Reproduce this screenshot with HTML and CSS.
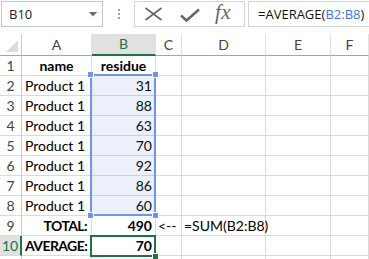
FILE: index.html
```html
<!DOCTYPE html>
<html>
<head>
<meta charset="utf-8">
<link rel="stylesheet" href="styles.css">
</head>
<body>
<div class="app">
  <div class="toolbar">
    <div class="namebox">
      <span class="nb-text">B10</span>
      <svg class="nb-arrow" width="8" height="5" viewBox="0 0 8 5"><path d="M0 0H8L4 4.5Z" fill="#6b6b6b"/></svg>
    </div>
    <div class="dots"><i></i><i></i><i></i></div>
    <div class="fbtns">
      <svg class="ic-x" width="19" height="14" viewBox="0 0 19 14"><path d="M1.5 1L17.5 13M17.5 1L1.5 13" stroke="#666" stroke-width="1.6" fill="none"/></svg>
      <svg class="ic-check" width="20" height="14" viewBox="0 0 20 14"><path d="M1 7.5L6.5 12.5L19 1.5" stroke="#666" stroke-width="2.6" fill="none"/></svg>
      <span class="fx">fx</span>
    </div>
    <div class="finput">=AVERAGE(<span class="ref">B2:B8</span>)</div>
  </div>
  <div class="sheet">
    <div class="grid">
      <div class="c hd corner"><span class="tri"></span></div>
      <div class="c hd">A</div>
      <div class="c hd sel">B</div>
      <div class="c hd">C</div>
      <div class="c hd">D</div>
      <div class="c hd">E</div>
      <div class="c hd">F</div>

      <div class="c rh">1</div><div class="c b ctr">name</div><div class="c b ctr">residue</div><div class="c"></div><div class="c"></div><div class="c"></div><div class="c"></div>
      <div class="c rh">2</div><div class="c">Product 1</div><div class="c r">31</div><div class="c"></div><div class="c"></div><div class="c"></div><div class="c"></div>
      <div class="c rh">3</div><div class="c">Product 1</div><div class="c r">88</div><div class="c"></div><div class="c"></div><div class="c"></div><div class="c"></div>
      <div class="c rh">4</div><div class="c">Product 1</div><div class="c r">63</div><div class="c"></div><div class="c"></div><div class="c"></div><div class="c"></div>
      <div class="c rh">5</div><div class="c">Product 1</div><div class="c r">70</div><div class="c"></div><div class="c"></div><div class="c"></div><div class="c"></div>
      <div class="c rh">6</div><div class="c">Product 1</div><div class="c r">92</div><div class="c"></div><div class="c"></div><div class="c"></div><div class="c"></div>
      <div class="c rh">7</div><div class="c">Product 1</div><div class="c r">86</div><div class="c"></div><div class="c"></div><div class="c"></div><div class="c"></div>
      <div class="c rh">8</div><div class="c">Product 1</div><div class="c r">60</div><div class="c"></div><div class="c"></div><div class="c"></div><div class="c"></div>
      <div class="c rh">9</div><div class="c b r tight">TOTAL:</div><div class="c b r">490</div><div class="c arrow">&lt;--</div><div class="c over">=SUM(B2:B8)</div><div class="c"></div><div class="c"></div>
      <div class="c rh rsel">10</div><div class="c b r tight">AVERAGE:</div><div class="c b r">70</div><div class="c"></div><div class="c"></div><div class="c"></div><div class="c"></div>
      <div class="c rh"></div><div class="c"></div><div class="c"></div><div class="c"></div><div class="c"></div><div class="c"></div><div class="c"></div>
    </div>
    <div class="range">
      <span class="h h1"></span><span class="h h2"></span><span class="h h3"></span><span class="h h4"></span>
    </div>
    <div class="active"><span class="fill"></span></div>
  </div>
</div>
</body>
</html>
```
FILE: styles.css
```css
html, body {
  margin: 0;
  padding: 0;
  background: #fff;
  overflow: hidden;
}
.app {
  width: 369px;
  height: 259px;
  overflow: hidden;
  font-family: Lato, "Open Sans", sans-serif;
  color: #000;
}
.toolbar {
  display: flex;
  align-items: flex-start;
  height: 34px;
  padding: 1px 0 0 1px;
  box-sizing: border-box;
}
.namebox {
  width: 102px;
  height: 26px;
  box-sizing: border-box;
  border: 1px solid #c6c6c6;
  display: flex;
  align-items: center;
  justify-content: space-between;
  padding: 0 5px 0 7px;
}
.nb-text {
  font-family: "Open Sans", sans-serif;
  font-size: 13px;
  color: #222;
}
.nb-arrow { margin-top: 1px; }
.dots {
  width: 31px;
  height: 26px;
  display: flex;
  flex-direction: column;
  align-items: center;
  justify-content: center;
  gap: 2px;
}
.dots i {
  display: block;
  width: 2px;
  height: 2px;
  background: #a0a0a0;
}
.fbtns {
  width: 111px;
  height: 26px;
  box-sizing: border-box;
  border: 1px solid #d4d4d4;
  display: flex;
  align-items: center;
  padding-left: 9px;
}
.ic-x { margin-right: 17px; }
.ic-check { margin-right: 15px; margin-top: 1px; }
.fx {
  font-family: "Liberation Serif", serif;
  font-style: italic;
  font-size: 21px;
  color: #666;
  margin-top: -3px;
  letter-spacing: 0.5px;
}
.finput {
  margin-left: 3px;
  flex: 1;
  height: 26px;
  box-sizing: border-box;
  border: 1px solid #d4d4d4;
  border-right: none;
  font-family: "Open Sans", sans-serif;
  font-size: 13px;
  line-height: 24px;
  padding-left: 9px;
  color: #111;
  white-space: nowrap;
}
.ref { color: #3c78d8; }

.sheet {
  position: relative;
}
.grid {
  display: grid;
  grid-template-columns: 22px 70px 64px 26px 84px 65px 1fr;
  grid-template-rows: 22px repeat(11, 20px);
}
.c {
  box-sizing: border-box;
  border-right: 1px solid #dadada;
  border-bottom: 1px solid #dadada;
  font-size: 14px;
  line-height: 19px;
  padding: 0 3px;
  white-space: nowrap;
  overflow: visible;
  position: relative;
}
.hd {
  text-align: center;
  color: #444;
  line-height: 21px;
  border-bottom: 1px solid #a5a5a5;
  border-right-color: #e2e2e2;
}
.hd.sel {
  background: #e1e1e1;
  color: #217346;
  border-bottom: 2px solid #217346;
  line-height: 20px;
}
.corner { border-right-color: #c8c8c8; }
.tri {
  position: absolute;
  right: 3px;
  bottom: 3px;
  width: 0;
  height: 0;
  border-left: 12px solid transparent;
  border-bottom: 12px solid #dcdcdc;
}
.rh {
  text-align: center;
  color: #444;
  padding: 0;
  border-right-color: #c8c8c8;
}
.rh.rsel {
  background: #e1e1e1;
  color: #217346;
  border-right: 2px solid #217346;
}
.b { font-weight: bold; }
.r { text-align: right; }
.ctr { text-align: center; }
.tight { letter-spacing: -0.6px; padding-right: 4px; }
.arrow { padding-left: 2px; }
.over { padding-left: 2px; z-index: 1; }

.range {
  position: absolute;
  left: 90px;
  top: 40px;
  width: 66px;
  height: 142px;
  box-sizing: border-box;
  border: 2px solid #6e95e6;
  background: rgba(90, 130, 220, 0.12);
}
.h {
  position: absolute;
  width: 5px;
  height: 5px;
  background: #6e95e6;
  border: 1px solid #fff;
}
.h1 { left: -5px; top: -5px; }
.h2 { right: -5px; top: -5px; }
.h3 { left: -5px; bottom: -5px; }
.h4 { right: -5px; bottom: -5px; }
.active {
  position: absolute;
  left: 90px;
  top: 201px;
  width: 66px;
  height: 22px;
  box-sizing: border-box;
  border: 2px solid #217346;
}
.fill {
  position: absolute;
  right: -5px;
  bottom: -5px;
  width: 5px;
  height: 5px;
  background: #217346;
  border: 1px solid #fff;
}
```
